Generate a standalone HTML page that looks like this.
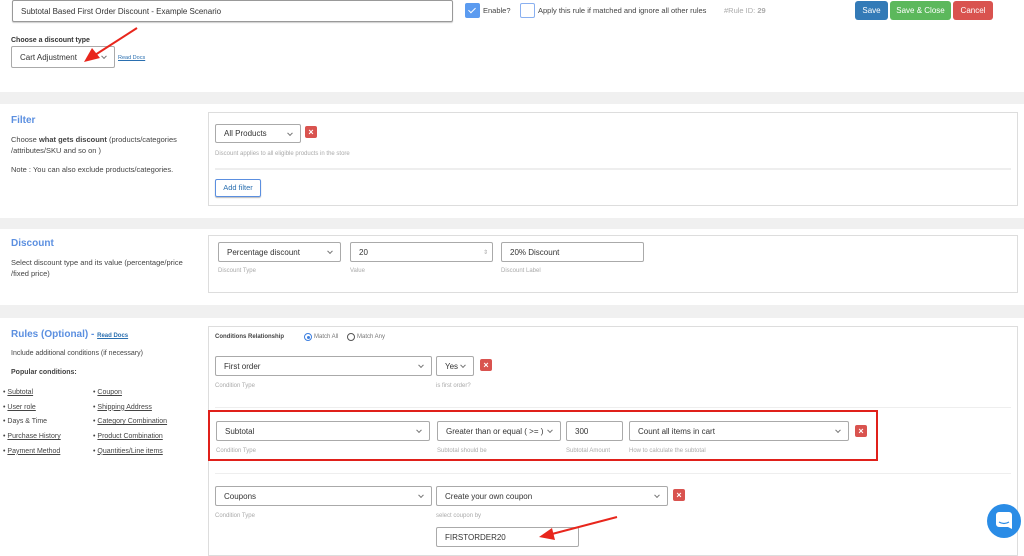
<!DOCTYPE html>
<html><head><meta charset="utf-8"><style>
*{box-sizing:border-box;margin:0;padding:0}
body{width:1024px;height:544px;position:relative;overflow:hidden;background:#fff;font-family:"Liberation Sans","DejaVu Sans",sans-serif;color:#333;font-size:8px}
.a{position:absolute;white-space:nowrap}
.band{position:absolute;left:0;width:1024px;background:#f0f0f0}
.panel{position:absolute;left:208px;width:810px;border:1px solid #ddd;background:#fff}
.sel{position:absolute;border:1px solid #aaa;border-radius:2px;background:#fff;font-size:8px;padding-left:8px;display:flex;align-items:center;color:#333}
.sel.dd::after{content:"";position:absolute;right:8px;top:50%;width:3px;height:3px;border-right:1px solid #777;border-bottom:1px solid #777;transform:translateY(-70%) rotate(45deg)}
.x{position:absolute;width:12px;height:12px;background:#d9534f;border-radius:2px;color:#fff;font-size:9px;font-weight:bold;text-align:center;line-height:12px}
.lbl{position:absolute;font-size:6px;color:#aaa;white-space:nowrap}
.btn{position:absolute;color:#fff;font-size:8px;border-radius:3px;text-align:center;line-height:19px}
.h{position:absolute;font-weight:bold;color:#5b8fe0;font-size:10px}
.t{position:absolute;font-size:7.5px;color:#444;white-space:nowrap}
.u{text-decoration:underline}
.hr{position:absolute;height:2px;background:#eee}
</style></head><body>
<div class="sel" style="left:12px;top:0;width:441px;height:22px;border-color:#999;box-shadow:0 1px 1px #ccc">Subtotal Based First Order Discount - Example Scenario</div>
<div class="a" style="left:465px;top:3px;width:15px;height:15px;background:#5b9bf0;border-radius:2px"><div style="position:absolute;left:5px;top:3px;width:4px;height:7px;border-right:1px solid #fff;border-bottom:1px solid #fff;transform:rotate(45deg)"></div></div>
<div class="t" style="left:483px;top:6px">Enable?</div>
<div class="a" style="left:520px;top:3px;width:15px;height:15px;border:1px solid #8ab0f0;border-radius:2px"></div>
<div class="t" style="left:538px;top:6px">Apply this rule if matched and ignore all other rules</div>
<div class="t" style="left:724px;top:6px;color:#aaa">#Rule ID: <b>29</b></div>
<div class="btn" style="left:855px;top:1px;width:33px;background:#337ab7">Save</div>
<div class="btn" style="left:890px;top:1px;width:61px;background:#5cb85c">Save &amp; Close</div>
<div class="btn" style="left:953px;top:1px;width:40px;background:#d9534f">Cancel</div>
<div class="t" style="left:11px;top:37px;font-weight:bold;font-size:7px;color:#333">Choose a discount type</div>
<div class="sel dd" style="left:11px;top:46px;width:104px;height:22px">Cart Adjustment</div>
<div class="t u" style="left:118px;top:55px;font-size:5.5px;color:#2a6fb0">Read Docs</div>

<div class="band" style="top:92px;height:12px"></div>
<div class="h" style="left:11px;top:115px">Filter</div>
<div class="t" style="left:11px;top:135px">Choose <b>what gets discount</b> (products/categories</div>
<div class="t" style="left:11px;top:146px">/attributes/SKU and so on )</div>
<div class="t" style="left:11px;top:165px">Note : You can also exclude products/categories.</div>
<div class="panel" style="top:112px;height:94px"></div>
<div class="sel dd" style="left:215px;top:124px;width:86px;height:19px">All Products</div>
<div class="x" style="left:305px;top:126px">×</div>
<div class="lbl" style="left:215px;top:151px">Discount applies to all eligible products in the store</div>
<div class="hr" style="left:215px;top:168px;width:796px"></div>
<div class="a" style="left:215px;top:179px;width:46px;height:18px;border:1px solid #5b8fe0;border-radius:2px;box-shadow:0 1px 1px #bbb;font-size:7.5px;color:#2a6fb0;text-align:center;line-height:16px">Add filter</div>

<div class="band" style="top:218px;height:11px"></div>
<div class="h" style="left:11px;top:238px">Discount</div>
<div class="t" style="left:11px;top:258px">Select discount type and its value (percentage/price</div>
<div class="t" style="left:11px;top:269px">/fixed price)</div>
<div class="panel" style="top:235px;height:58px"></div>
<div class="sel dd" style="left:218px;top:242px;width:123px;height:20px">Percentage discount</div>
<div class="sel" style="left:350px;top:242px;width:143px;height:20px">20<span style="position:absolute;right:4px;font-size:6px;color:#aaa">⇕</span></div>
<div class="sel" style="left:501px;top:242px;width:143px;height:20px">20% Discount</div>
<div class="lbl" style="left:218px;top:268px">Discount Type</div>
<div class="lbl" style="left:350px;top:268px">Value</div>
<div class="lbl" style="left:501px;top:268px">Discount Label</div>

<div class="band" style="top:305px;height:13px"></div>
<div class="h" style="left:11px;top:329px">Rules (Optional) - <span class="u" style="font-size:6px;color:#2a6fb0">Read Docs</span></div>
<div class="t" style="left:11px;top:350px;font-size:7px">Include additional conditions (if necessary)</div>
<div class="t" style="left:11px;top:369px;font-size:7px;font-weight:bold">Popular conditions:</div>
<div class="t" style="left:3px;top:386px;font-size:7px;line-height:14.7px">• <span class="u">Subtotal</span><br>• <span class="u">User role</span><br>• Days &amp; Time<br>• <span class="u">Purchase History</span><br>• <span class="u">Payment Method</span></div>
<div class="t" style="left:93px;top:386px;font-size:7px;line-height:14.7px">• <span class="u">Coupon</span><br>• <span class="u">Shipping Address</span><br>• <span class="u">Category Combination</span><br>• <span class="u">Product Combination</span><br>• <span class="u">Quantities/Line items</span></div>
<div class="panel" style="top:326px;height:230px"></div>
<div class="t" style="left:215px;top:334px;font-size:6px;font-weight:bold">Conditions Relationship</div>
<div class="a" style="left:304px;top:333px;width:8px;height:8px;border:1px solid #3b7ee0;border-radius:50%"><div style="margin:1.5px;width:3px;height:3px;border-radius:50%;background:#3b7ee0"></div></div>
<div class="t" style="left:314px;top:334px;font-size:6px;color:#777">Match All</div>
<div class="a" style="left:347px;top:333px;width:8px;height:8px;border:1px solid #555;border-radius:50%"></div>
<div class="t" style="left:357px;top:334px;font-size:6px;color:#777">Match Any</div>
<div class="sel dd" style="left:215px;top:356px;width:217px;height:20px">First order</div>
<div class="sel dd" style="left:436px;top:356px;width:38px;height:20px">Yes</div>
<div class="x" style="left:480px;top:359px">×</div>
<div class="lbl" style="left:215px;top:383px">Condition Type</div>
<div class="lbl" style="left:436px;top:383px">is first order?</div>
<div class="hr" style="left:215px;top:407px;width:796px;height:1px"></div>
<div class="a" style="left:208px;top:410px;width:670px;height:51px;border:2px solid #e0201a"></div>
<div class="sel dd" style="left:216px;top:421px;width:214px;height:20px">Subtotal</div>
<div class="sel dd" style="left:437px;top:421px;width:124px;height:20px">Greater than or equal ( &gt;= )</div>
<div class="sel" style="left:566px;top:421px;width:57px;height:20px">300</div>
<div class="sel dd" style="left:629px;top:421px;width:220px;height:20px">Count all items in cart</div>
<div class="x" style="left:855px;top:425px">×</div>
<div class="lbl" style="left:216px;top:448px">Condition Type</div>
<div class="lbl" style="left:437px;top:448px">Subtotal should be</div>
<div class="lbl" style="left:566px;top:448px">Subtotal Amount</div>
<div class="lbl" style="left:629px;top:448px">How to calculate the subtotal</div>
<div class="hr" style="left:215px;top:473px;width:796px;height:1px"></div>
<div class="sel dd" style="left:215px;top:486px;width:217px;height:20px">Coupons</div>
<div class="sel dd" style="left:436px;top:486px;width:232px;height:20px">Create your own coupon</div>
<div class="x" style="left:673px;top:489px">×</div>
<div class="lbl" style="left:215px;top:513px">Condition Type</div>
<div class="lbl" style="left:436px;top:513px">select coupon by</div>
<div class="sel" style="left:436px;top:527px;width:143px;height:20px">FIRSTORDER20</div>

<svg class="a" style="left:0;top:0" width="1024" height="544">
<g stroke="#e8261c" stroke-width="2" fill="#e8261c">
<line x1="137" y1="28" x2="95" y2="55"/><polygon points="84,62 92,48 100,58" stroke="none"/>
<line x1="617" y1="517" x2="552" y2="534"/><polygon points="539,537 552,528 555,540" stroke="none"/>
</g>
<circle cx="1004" cy="521" r="17" fill="#2a8ce6"/>
<path d="M999 512 h10 a3 3 0 0 1 3 3 v14 l-4 -2 h-9 a3 3 0 0 1 -3 -3 v-9 a3 3 0 0 1 3 -3 z" fill="#fff"/>
<path d="M999 522 q5 3 10 0" fill="none" stroke="#2a8ce6" stroke-width="1.2"/>
</svg>
</body></html>
